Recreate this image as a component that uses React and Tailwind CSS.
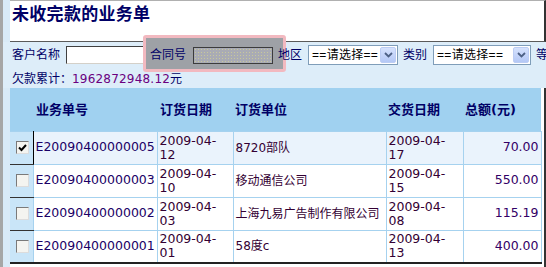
import React from 'react';

const rows = [
  { id: 'E20090400000005', order: ['2009-04-', '12'], unit: '8720部队', deliver: ['2009-04-', '17'], total: '70.00', checked: true },
  { id: 'E20090400000003', order: ['2009-04-', '10'], unit: '移动通信公司', deliver: ['2009-04-', '15'], total: '550.00' },
  { id: 'E20090400000002', order: ['2009-04-', '03'], unit: '上海九易广告制作有限公司', deliver: ['2009-04-', '08'], total: '115.19' },
  { id: 'E20090400000001', order: ['2009-04-', '01'], unit: '58度c', deliver: ['2009-04-', '13'], total: '400.00' },
];

const Checkbox = ({ checked }) => (
  <span className="flex w-[13px] h-[13px] border border-t-[#7a7a7a] border-l-[#7a7a7a] border-b-[#dcdcdc] border-r-[#dcdcdc] bg-[#f4f4f0] items-center justify-center">
    {checked && (
      <svg width="9" height="8" viewBox="0 0 9 8">
        <path d="M1 3.5 L3.5 6 L8 1" stroke="#000" strokeWidth="2" fill="none" />
      </svg>
    )}
  </span>
);

const Select = ({ width }) => (
  <div className={`shrink-0 flex items-center h-[20px] border border-[#7f9db9] bg-white pl-[3px] pr-px ${width}`}>
    <span className="flex-1 text-[12px] leading-none text-black font-['Liberation_Sans','Noto_Sans_CJK_SC',sans-serif] tracking-[0.3px]">==请选择==</span>
    <span className="shrink-0 flex items-center justify-center w-[16px] h-[16px] rounded-[2px] bg-gradient-to-b from-[#d6e2fd] to-[#b4c8f6] border border-[#bccdf4]">
      <svg width="9" height="6" viewBox="0 0 9 6">
        <path d="M1 1 L4.5 4.5 L8 1" stroke="#4d6185" strokeWidth="1.8" fill="none" />
      </svg>
    </span>
  </div>
);

export default function App() {
  return (
    <div className="w-[546px] h-[267px] overflow-hidden bg-white border-l-[3px] border-[#a6a6a6] font-['DejaVu_Sans','Noto_Sans_CJK_SC',sans-serif]">
      <div className="flex flex-col bg-[#d9eaf7] pl-[7px] h-full">
        <div className="h-[42px] bg-white border-b border-[#5a5a5a] border-r-2 border-r-[#333] border-t border-t-[#b0b0b0] px-[2px] pt-[3px]">
          <h1 className="text-[17px] font-bold leading-[20px] text-[#000066] tracking-[0.3px]">未收完款的业务单</h1>
        </div>

        <div className="h-[46px] bg-[#ddedf9] -ml-[7px] pl-[9px] flex flex-col">
          <div className="flex items-center h-[20px] mt-[3px] text-[12px] text-[#000066] whitespace-nowrap">
            <span className="shrink-0">客户名称</span>
            <div className="shrink-0 ml-[6px] w-[79px] h-[18px] bg-white border border-t-[#404040] border-l-[#404040] border-b-[#d4d0c8] border-r-[#d4d0c8]" />
            <div className="shrink-0 relative flex items-center h-[18px]">
              <span className="absolute -left-[2px] -right-[13px] -top-[11px] -bottom-[8px] bg-[#9ea1a6] border-[3px] border-[#f2b9c0] rounded-[3px]" />
              <span className="relative pl-[5px]">合同号</span>
              <div className="relative ml-[7px] w-[80px] h-[17px] border border-[#3c3c3c] bg-[#a9abb4] bg-[radial-gradient(#c8c89a_0.6px,transparent_0.8px)] bg-[length:3px_3px]" />
            </div>
            <span className="shrink-0 relative ml-[5px]">地区</span>
            <div className="shrink-0 ml-[6px]"><Select width="w-[90px]" /></div>
            <span className="shrink-0 ml-[5px]">类别</span>
            <div className="shrink-0 ml-[6px]"><Select width="w-[98px]" /></div>
            <span className="shrink-0 ml-[5px]">等</span>
          </div>
          <div className="mt-[8px] text-[12px] leading-[13px] text-[#000066] whitespace-nowrap">
            欠款累计：<span className="text-[#6a0080] tracking-[0.2px]">1962872948.12</span>元
          </div>
        </div>

        <div className="flex-1 border-r-2 border-[#333] pr-[3px] bg-white">
          <table className="w-[531px] border-collapse table-fixed border-b-2 border-b-[#222]">
            <colgroup>
              <col className="w-[23px]" />
              <col className="w-[124px]" />
              <col className="w-[76px]" />
              <col className="w-[153px]" />
              <col className="w-[77px]" />
              <col className="w-[78px]" />
            </colgroup>
            <thead>
              <tr className="h-[43px] bg-[#a0d1f0] text-[13px] font-bold text-[#000066] text-left">
                <th></th>
                <th className="pl-[3px] font-bold">业务单号</th>
                <th className="pl-[3px] font-bold">订货日期</th>
                <th className="pl-[2px] font-bold">订货单位</th>
                <th className="pl-[2px] font-bold">交货日期</th>
                <th className="pl-[2px] font-bold">总额(元)</th>
              </tr>
            </thead>
            <tbody>
              {rows.map((r) => (
                <tr key={r.id} className={`h-[33px] ${r.checked ? 'bg-[#eaf3fc]' : 'bg-white'}`}>
                  <td className={`bg-[#c9e5f8] border-b border-b-[#333] ${r.checked ? 'border-r border-r-black' : 'border-r border-r-[#a6d2ef]'} border-t border-t-[#a6d2ef] pl-[6px]`}>
                    <Checkbox checked={r.checked} />
                  </td>
                  <td className="border border-[#a6d2ef] pl-[2px] text-[12.5px] text-[#1a0066] whitespace-nowrap">{r.id}</td>
                  <td className="border border-[#a6d2ef] pl-[2px] text-[12.5px] leading-[14px] text-[#330033]">
                    {r.order[0]}<br />{r.order[1]}
                  </td>
                  <td className="border border-[#a6d2ef] pl-[2px] text-[12px] text-[#330033] whitespace-nowrap">{r.unit}</td>
                  <td className="border border-[#a6d2ef] pl-[2px] text-[12.5px] leading-[14px] text-[#330033]">
                    {r.deliver[0]}<br />{r.deliver[1]}
                  </td>
                  <td className="border border-[#a6d2ef] pr-[2px] text-right text-[12.5px] text-[#330066]">{r.total}</td>
                </tr>
              ))}
            </tbody>
          </table>
        </div>
      </div>
    </div>
  );
}
